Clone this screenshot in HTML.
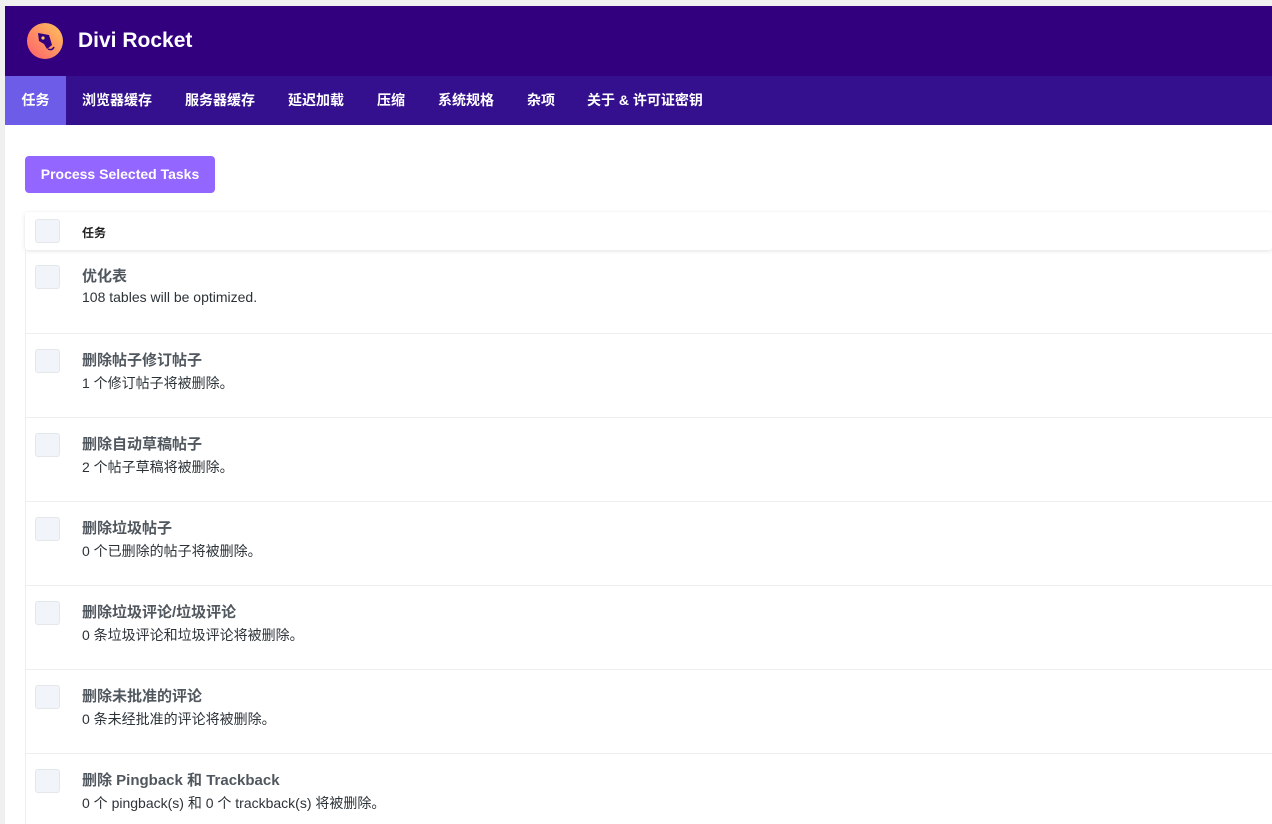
<!DOCTYPE html>
<html><head><meta charset="utf-8"><style>
*{box-sizing:border-box;margin:0;padding:0}
body{width:1272px;height:824px;overflow:hidden;background:#f0f0f1;font-family:"Liberation Sans","Noto Sans CJK SC",sans-serif;}
.wrap{position:absolute;left:5px;top:6px;width:1267px;height:818px;background:#fff;overflow:hidden}
.hdr{height:70px;background:#32007f;position:relative}
.logo{position:absolute;left:22px;top:17px;width:36px;height:36px}
.title{position:absolute;left:73px;top:23px;color:#fff;font-size:21px;font-weight:bold}
.nav{height:49px;background:#34108f;position:relative}
.nav div{position:absolute;top:0;color:#fff;font-size:14px;font-weight:bold;line-height:49px}
.nav .act{background:#6c5ce7;width:61px;left:0;text-align:center}
.btn{position:absolute;left:20px;top:150px;width:190px;height:37px;background:#9366ff;border-radius:4px;color:#fff;font-size:14px;font-weight:bold;line-height:37px;text-align:center}
.th{position:absolute;left:20px;top:206px;width:1247px;height:38px;background:#fff;box-shadow:0 1px 4px rgba(0,0,0,.12);border-radius:3px}
.cb{position:absolute;left:10px;width:25px;height:24px;background:#f1f4f8;border:1px solid #e3e7ec;border-radius:3px}
.th .cb{top:7px}
.th span{position:absolute;left:57px;top:12px;font-size:12px;font-weight:bold;color:#222}
.rows{position:absolute;left:20px;top:244px;width:1247px;border-left:1px solid #eee}
.row{height:84px;border-bottom:1px solid #eee;position:relative}
.row .cb{top:15px;left:9px}
.row h4{position:absolute;left:56px;top:15px;font-size:15px;font-weight:bold;color:#50575e}
.row p{position:absolute;left:56px;top:39px;font-size:14px;color:#2c3338}
</style></head><body>
<div class="wrap">
<div class="hdr">
<svg class="logo" viewBox="0 0 36 36"><defs><linearGradient id="g" x1="0" y1="1" x2="1" y2="0"><stop offset="0" stop-color="#ff5e6c"/><stop offset="1" stop-color="#ffc45a"/></linearGradient></defs><circle cx="18" cy="18" r="18" fill="url(#g)"/><path d="M11 10 L22 12 L25 22 L20 26 L17 21 L12 18 Z" fill="#32007f"/><path d="M21 26 q4 2 6 -2" stroke="#32007f" stroke-width="1.5" fill="none"/><circle cx="16" cy="15" r="1.6" fill="#ffc45a"/></svg>
<div class="title">Divi Rocket</div>
</div>
<div class="nav"><div class="act">任务</div><div style="left:77px">浏览器缓存</div><div style="left:180px">服务器缓存</div><div style="left:283px">延迟加载</div><div style="left:372px">压缩</div><div style="left:433px">系统规格</div><div style="left:522px">杂项</div><div style="left:582px">关于 &amp; 许可证密钥</div></div>
<div class="btn">Process Selected Tasks</div>
<div class="th"><div class="cb"></div><span>任务</span></div>
<div class="rows">
<div class="row"><div class="cb"></div><h4>优化表</h4><p>108 tables will be optimized.</p></div>
<div class="row"><div class="cb"></div><h4>删除帖子修订帖子</h4><p>1 个修订帖子将被删除。</p></div>
<div class="row"><div class="cb"></div><h4>删除自动草稿帖子</h4><p>2 个帖子草稿将被删除。</p></div>
<div class="row"><div class="cb"></div><h4>删除垃圾帖子</h4><p>0 个已删除的帖子将被删除。</p></div>
<div class="row"><div class="cb"></div><h4>删除垃圾评论/垃圾评论</h4><p>0 条垃圾评论和垃圾评论将被删除。</p></div>
<div class="row"><div class="cb"></div><h4>删除未批准的评论</h4><p>0 条未经批准的评论将被删除。</p></div>
<div class="row"><div class="cb"></div><h4>删除 Pingback 和 Trackback</h4><p>0 个 pingback(s) 和 0 个 trackback(s) 将被删除。</p></div>
</div>
</div>
</body></html>
